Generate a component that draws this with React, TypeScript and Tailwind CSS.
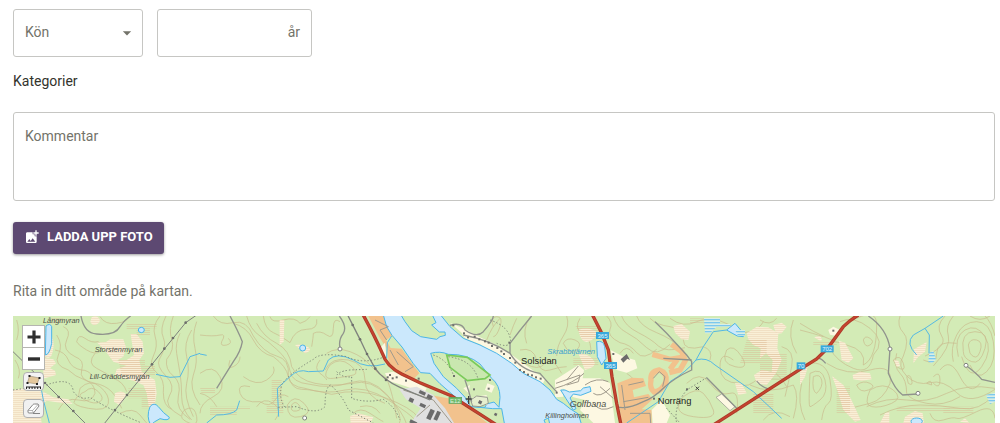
import type { ReactNode } from 'react';
import { MdAddPhotoAlternate, MdArrowDropDown } from 'react-icons/md';

interface MapButtonProps {
  label: string;
  className: string;
  children: ReactNode;
}

const contours = [
  // west
  'M190,50 q25,10 10,40 t25,50 q30,10 20,40 t40,40 q30,5 50,25 t30,50',
  'M170,75 q20,30 5,60 t30,45 q20,20 50,30 t30,40 q-10,30 -50,20 t-60,30',
  'M230,95 q5,-25 25,-10 t40,10 q20,20 5,30 t-40,-5 t-30,-25',
  'M255,245 q20,-20 40,0 t5,30 t-45,-5 t0,-25',
  'M240,235 q30,-30 60,-5 t25,50 t-60,15 t-40,-25 t15,-35',
  'M165,120 q30,5 40,30 t40,30 q20,0 35,20',
  'M480,18 q-25,30 -15,60 t-5,60 q-15,30 10,50 t20,60 q0,40 25,50',
  'M498,18 q-20,40 -8,65 t-12,65 q-10,20 20,50 t10,60 t35,60',
  'M520,18 q-15,40 -5,70 t-15,60 q-5,30 20,50 t15,60 t35,70',
  'M540,70 q-15,30 -10,60 t10,60 t5,70 t30,70',
  'M575,60 q-25,40 -15,80 t0,80 t20,100',
  'M590,35 q-15,40 -5,80 t-5,80 t20,90',
  'M285,130 q-25,30 5,45 t50,30 q30,10 40,40',
  'M300,20 q15,25 50,20 t35,-20',
  'M45,150 q20,30 10,55 M50,30 q10,30 0,60',
  'M545,320 q0,-20 20,-25 t25,25 t-20,20 t-25,-20',
  'M360,310 q40,-20 60,5 t20,24',
  // between the western power line and the railway
  'M600,75 q40,5 60,0 t5,20 q-5,15 15,10 t5,-20',
  'M640,18 q20,30 60,20 t60,40 q30,50 70,60 t35,60 q10,40 40,40 t90,15 q80,-20 160,10 t100,60',
  'M700,40 q40,10 60,50 t60,50 q40,30 45,60 t50,35 q60,20 120,5 t130,30 t80,60',
  'M740,18 q10,40 40,60 t50,40 q35,30 40,65 t60,40 q60,15 120,-5 t110,35 t60,90',
  'M770,40 q20,40 60,60 t45,70 q20,40 70,50 t110,0 q60,-15 110,40 t30,90',
  'M790,18 q5,40 30,50 t50,30 q15,-40 50,-40 t30,-30',
  'M810,20 q5,20 40,10 t50,10 q20,-5 30,-20',
  'M980,130 q30,-20 70,-5 t60,40 t50,40 q20,50 30,120',
  'M990,165 q30,-25 60,0 t10,30 t-60,10 t-10,-40',
  'M975,180 q20,-40 70,-30 t50,60 t60,70',
  'M600,190 q40,-30 60,10 t-20,60 t-40,50',
  'M750,230 q-40,-10 -30,20 t60,25 q30,20 45,-5 t40,-10 M730,200 q40,30 70,10 t20,-40',
  'M600,250 q30,5 50,40 M770,290 q20,-30 50,-10 t5,50',
  'M875,285 q10,-15 22,0 t-8,18 t-14,-18',
  'M862,285 q20,-35 50,-5 t-10,40 t-40,-35',
  'M960,150 q-20,25 0,40 t20,20 M935,110 q5,-30 5,-40 q20,-10 40,5 t20,-20 t20,-20',
  'M1060,310 q20,-20 50,0 t40,25 M1080,290 q40,-10 60,20',
  'M690,150 q-10,30 10,20 t20,-30',
  // north shore
  'M1480,50 q-10,-30 10,-30 t10,30 t-20,30',
  'M1530,75 q10,-30 20,-50 M1580,100 q-15,-40 10,-80 M1560,120 q40,-10 50,30 t40,30 t50,-10',
  'M1460,90 q15,-40 40,-65 M1690,100 q10,-20 35,-10 t5,30 t-40,-20',
  'M1740,25 q-20,30 10,50 t20,60 M1700,18 q10,30 -10,60 t-20,60',
  'M1575,160 q40,25 60,0 t50,30',
  // north-east of the main road
  'M1820,18 q20,20 10,40 t30,40 q30,5 50,30 t60,-10',
  'M1840,18 q10,35 40,50 t60,45 t70,-10',
  'M1865,18 q10,30 50,50 t60,40 t80,5',
  'M1910,18 q10,30 60,50 t60,40',
  'M1950,25 q20,20 60,25 t40,40 t60,20 q30,10 20,40',
  'M2010,25 q40,30 80,10 t100,10 q30,30 60,20 t40,-30',
  'M2180,120 q20,-20 45,20 t-20,30 t-25,-50',
  'M2200,150 q-40,-30 -40,20 t60,50 q20,20 60,-20 t80,30',
  'M2060,220 q40,-40 70,0 t60,30 t20,60',
  'M2050,260 q40,-30 60,-10 t30,50 t-60,20 t-30,-60',
  'M2280,30 q30,20 50,-5 M2345,110 q40,10 30,60 t-20,90',
  'M2280,200 q60,20 110,-10 M2250,225 q60,30 130,0 q20,30 0,100',
  'M2380,30 q-20,50 10,100 M2290,330 q30,-40 80,-10',
  'M1880,190 q30,20 20,30 M1860,130 q20,-30 40,0',
  // east
  'M2400,40 q80,50 140,65 t50,60 q20,-10 30,-40 t10,-80 t-60,-20',
  'M2400,60 q40,10 70,20 M2520,35 q40,-20 90,20 t10,80 q-10,60 -60,40 t-70,-60',
  'M2590,90 q5,-15 20,-5 t0,20 t-20,-15',
  'M2440,200 q20,-10 25,10 t-15,40 q-15,-5 -10,-50',
  'M2430,190 q35,-20 45,20 t-15,60 t-30,20 t0,-100',
  'M2420,160 q60,-10 70,50 t-5,70 t-20,50 M2405,220 q-15,60 10,110',
  'M2480,160 q60,40 130,20 t60,40 q-20,50 -60,60 t-80,20',
  'M2570,225 q20,-15 40,-5 t-5,20 t-35,-15 M2610,240 q40,-25 70,0 t-5,40 t-60,10 t-5,-50',
  'M2690,130 q-10,40 10,60 t20,60 q10,20 60,30 t100,-20',
  'M2700,18 q-10,30 10,50 t0,70 q-20,30 10,60 t70,20 t80,30 t115,-10',
  'M2680,150 q20,-20 30,10 t-20,10 z M2720,200 q10,-10 15,10 t-10,10 z',
  'M2600,290 q60,-30 120,-20 t120,-20 t145,-15',
  'M2640,315 q60,-30 120,-30 t120,10 t100,-40',
  'M2790,310 q10,30 40,20 t40,-5 t60,-20 t55,20 M2770,150 q40,20 40,-20 t60,-30',
  'M2835,18 q-30,30 -10,60 t-50,60 M2860,18 q-25,30 -15,60 t-45,90',
  'M2860,155 q-10,-40 10,-80 t60,-40 t50,60 t-20,90 t-50,-20',
  'M2875,140 q-15,-60 20,-80 t60,20 t-10,90 t-60,-30',
  'M2890,125 q-10,-60 35,-60 t30,50 t-40,40 t-25,-30',
  'M2905,105 q5,-20 25,-15 t10,35 t-30,5 z',
  'M2820,180 q30,-40 60,20 t60,20 M2780,220 q15,-15 15,5 z M2800,200 q20,-20 20,10 t-20,10',
  'M2955,18 q20,20 30,60 M2910,18 q30,20 60,0',
];

const bogs = [
  'M135,65 q30,10 25,50 t-25,25 z',
  'M130,143 L160,148 L168,160 L150,175 L165,182 L168,195 L135,205 L130,205 Z',
  'M275,22 q15,-8 22,3 t-6,18 t-20,-8 z',
  'M292,98 L318,96 L330,88 L370,88 L378,112 L370,140 L350,152 L380,150 L402,135 L396,100 L392,72 L410,72 L428,95 L432,130 L418,150 L425,185 L465,210 L470,250 L460,310 L448,300 L440,250 L430,225 L400,212 L370,205 L345,195 L350,178 L380,168 L340,155 L318,125 Z',
  'M345,250 Q365,238 378,252 Q372,275 358,285 L342,275 Z',
  'M39,240 L75,235 L130,245 L160,262 L205,268 L218,282 L190,280 L140,272 L118,290 L125,339 L39,339 Z',
  'M839,30 H853 L851,95 L839,105 Z',
  'M885,105 q20,-5 38,5 t-8,20 z',
  'M1050,318 L1075,310 L1120,322 L1112,339 H1052 Z',
  'M1735,60 q20,-10 45,0 t-5,30 t-40,-30 z',
  'M1735,130 q30,0 45,20 t-25,30 z',
  'M2020,48 L2045,42 L2070,65 L2065,90 L2045,88 L2025,68 Z',
  'M2240,70 L2270,50 L2305,52 L2335,70 L2332,115 L2345,150 L2328,190 L2300,225 L2270,220 L2262,195 L2285,180 L2315,185 L2318,150 L2298,130 L2280,145 L2282,115 L2260,105 L2245,88 Z',
  'M2320,45 L2345,38 L2360,50 L2345,70 L2328,72 Z',
  'M2205,220 L2225,220 L2240,250 L2215,255 Z',
  'M2400,180 L2425,165 L2415,200 L2400,225 Z',
  'M2443,82 q20,-8 22,5 t-22,-5 z',
  'M2517,92 L2535,98 L2560,145 L2545,158 L2525,150 Z',
  'M2558,195 L2580,185 L2610,190 L2615,208 L2585,212 L2560,208 Z',
  'M2496,198 L2530,225 L2552,265 L2582,330 L2565,335 L2530,300 L2512,240 Z',
  'M2640,339 L2655,310 L2668,305 V339 Z',
  'M2740,160 L2742,118 L2780,96 L2775,125 L2755,140 Z',
  'M2682,150 L2695,152 L2700,168 L2690,170 Z',
  'M2710,339 L2715,320 L2745,303 L2768,310 L2772,339 Z',
  'M2880,335 L2895,325 L2908,339 Z',
];

const marshes = [
  'M380,40 h90 v15 h-20 v20 h-40 v-15 h-30 z',
  'M355,150 h80 v15 h30 v30 h-100 z',
  'M385,235 h80 v60 h-40 v-30 h-40 z',
  'M150,25 h40 v15 h-40 z',
  'M630,290 h120 v10 h-40 v15 h-80 z',
  'M815,210 h30 v60 h5 v40 h-50 v-25 h15 z',
  'M600,232 h45 v20 h-40 z',
  'M1725,45 h70 v40 h-50 z',
  'M1720,145 h75 v20 h-75 z',
  'M2070,25 h60 v15 h-60 z',
  'M2240,90 h60 v40 h60 v70 h-80 v-40 h-60 z',
  'M2260,250 h60 v60 h-60 z',
  'M2440,95 h70 v12 h-70 z',
  'M2510,230 h40 v80 h-40 z',
  'M2690,290 h160 v15 h-160 z',
  'M2830,290 h90 v20 h-90 z',
];

const trails = [
  'M39,240 L131,228 Q215,195 220,245 Q240,272 270,262 Q330,300 425,339',
  'M1155,140 Q1090,165 1040,140 Q960,125 940,148 Q860,195 845,225 Q835,265 855,292',
  'M835,292 L890,290 Q950,315 975,290 Q975,230 992,225 Q1030,260 1045,300 L1120,339',
  'M1010,185 Q1030,205 1055,200 L1055,265 Q1100,280 1150,268 Q1185,290 1200,330',
  'M1010,205 Q1005,185 1050,180 L1100,178',
  'M1470,30 Q1530,50 1532,95 Q1525,115 1490,100',
  'M1300,135 Q1345,150 1362,200',
  'M1345,140 Q1420,150 1435,210',
  'M2120,203 L2060,240 Q2020,290 2030,339',
  'M2000,295 L2040,339',
];

const minorRoads = [
  'M243,18 Q252,70 290,72 Q345,78 360,50 Q375,28 392,18',
  'M690,18 Q715,65 727,95 Q722,125 700,155 L650,235',
  'M1018,18 Q1042,50 1030,70 Q1015,90 1020,112',
  'M1350,46 Q1385,35 1395,60 Q1430,85 1450,65 Q1480,30 1480,18',
  'M1390,75 Q1470,90 1530,130 L1530,100 Q1560,60 1595,18',
  'M1530,130 Q1560,180 1620,190 Q1650,225 1670,245',
  'M1395,210 L1405,240 L1415,275',
  'M1965,35 L2000,70 L2060,135 L2075,155 L2075,180 Q2020,205 1990,235 Q1960,265 1930,275 Q1880,300 1850,290',
  'M2075,150 L1990,145 M2120,203 L2210,295',
  'M2270,213 Q2280,228 2305,237',
  'M2455,145 Q2465,145 2477,160',
  'M2605,18 Q2660,55 2670,115 L2665,190 Q2685,240 2708,255 L2752,252',
  'M2900,168 Q2930,190 2945,208 L2985,217',
];

const streams = [
  'M600,130 L570,140 L540,200 L510,202 L468,193',
  'M120,215 L130,270 L148,339',
  'M600,132 L620,136',
  'M1155,162 Q1100,178 1060,150 Q1010,125 985,150 L970,183 L925,185 Q895,175 870,200 L832,235 L836,320',
  'M620,339 L650,315 Q695,315 710,300 L719,272',
  'M1175,78 L1162,98 L1160,145',
  'M2180,60 L2140,65 L2110,110 L2088,150 Q2060,185 2010,215 Q1995,240 1975,275 L1880,339',
  'M2088,150 Q2120,140 2145,165 L2260,245 L2345,325',
  'M2750,135 Q2715,100 2740,75 L2775,55 L2830,18',
  'M2775,55 L2788,75 L2787,130',
];

const mainRoads = [
  'M1088,12 Q1125,80 1147,130 Q1160,170 1205,192 L1260,218 L1355,258 L1490,345',
  'M1776,12 L1803,65 L1825,120 L1836,200 L1850,280 L1863,345',
  'M2140,345 L2400,178 L2450,147 L2485,112 L2530,50 Q2550,30 2575,15',
];

const blocks: [number, number, number, number][] = [
  [1260, 240, 20, 10],
  [1284, 252, 16, 12],
  [1230, 262, 14, 12],
  [1262, 278, 18, 10],
  [1292, 296, 14, 32],
  [1312, 302, 12, 28],
  [1232, 328, 22, 10],
  [1438, 270, 10, 10],
  [1485, 308, 8, 8],
];

const powerPoles = [
  [557, 38], [519, 84], [493, 116], [456, 163], [417, 210], [381, 255], [345, 300],
  [135, 219], [176, 261], [220, 303],
  [1058, 45], [1080, 88], [1101, 132], [1126, 176], [1158, 210],
];

const houses = [
  [1360, 46], [1392, 70], [1404, 82], [1424, 80], [1438, 88], [1455, 94], [1466, 98], [1476, 108],
  [1492, 114], [1504, 124], [1512, 132], [1530, 144], [1546, 158], [1560, 180], [1572, 186],
  [1584, 194], [1596, 196], [1608, 202], [1622, 206], [1670, 248], [1528, 98], [1362, 198],
  [1422, 238], [1470, 210], [1466, 236], [1256, 206], [2061, 238], [1840, 132], [2500, 62],
  [1170, 195], [1178, 205], [1163, 202], [1190, 202], [1218, 212], [1962, 266],
];

const junctions = [
  [1020, 117], [914, 324], [2670, 117], [2754, 250], [2898, 166],
];

const shields: [number, number, string][] = [
  [1788, 66, '365'],
  [1812, 156, '365'],
  [2462, 106, '702'],
  [2390, 157, '70'],
];

function AreaMap() {
  return (
    <svg
      className="block h-full w-full font-['Liberation_Sans',Arial,sans-serif]"
      viewBox="39 18 2946 321"
      preserveAspectRatio="xMinYMin slice"
      role="img"
      aria-label="Karta"
    >
      <defs>
        <pattern id="marsh" width="12" height="6" patternUnits="userSpaceOnUse">
          <rect width="12" height="2" fill="#d9b38c" />
        </pattern>
        <pattern id="wetland" width="12" height="9" patternUnits="userSpaceOnUse">
          <rect width="12" height="9" fill="#d9efe6" />
          <rect width="12" height="4" fill="#7cc8ee" />
        </pattern>
      </defs>

      <rect x="39" y="18" width="2946" height="1200" fill="#d3ebb6" />

      <g fill="none" stroke="#c5a47c" strokeWidth="2" opacity="0.7">
        {contours.map((d) => <path key={d} d={d} />)}
      </g>
      <g fill="#f9efd6">
        {bogs.map((d) => <path key={d} d={d} />)}
      </g>
      <g fill="url(#marsh)" opacity="0.6">
        {marshes.map((d) => <path key={d} d={d} />)}
      </g>
      <g fill="url(#marsh)" opacity="0.35">
        {bogs.map((d) => <path key={d} d={d} />)}
      </g>

      {/* built-up areas */}
      <g fill="#f2c28d">
        <path d="M1105,18 H1150 L1176,78 L1158,90 L1172,114 L1205,116 L1240,166 L1258,190 L1240,208 L1200,188 L1168,165 L1160,115 L1140,85 Z" />
        <path d="M1290,255 L1360,268 L1420,305 L1462,339 H1345 L1335,295 Z" />
        <path d="M1852,220 L1895,203 L1930,205 L1938,228 L1898,240 L1902,262 L1945,252 L1958,268 L1925,298 L1955,300 V339 H1864 Z" />
      </g>
      <g fill="none" stroke="#f2c28d" strokeWidth="16">
        <path d="M1957,133 L2010,148 L2045,142 M2010,178 L2032,148 M2014,103 L2045,125 L2056,152 L2040,180 L2008,188" />
        <path d="M1953,210 Q1950,185 1978,180 Q2002,188 1998,215 Q1985,245 1962,246 Q1948,235 1953,210 Z" />
      </g>
      <g fill="#fdf8e2">
        <path d="M1135,120 L1155,98 L1160,150 L1152,140 Z M1155,190 L1180,185 L1235,210 L1280,235 L1272,250 L1215,228 L1165,212 Z" />
        <path d="M1350,38 L1395,58 L1440,82 L1490,105 L1540,138 L1635,208 L1628,222 L1560,190 L1500,140 L1440,103 L1395,85 L1385,68 Z" />
        <path d="M1665,210 L1735,165 L1752,180 L1748,205 L1800,205 L1830,220 L1845,339 H1780 L1740,300 L1755,270 L1720,262 L1688,235 L1690,260 L1665,262 Z" />
        <path d="M1832,120 L1870,140 L1905,150 L1912,175 L1880,188 L1850,180 L1838,150 Z" />
        <path d="M1955,300 L1985,270 L2010,315 L2000,339 H1958 Z" />
        <path d="M2485,60 L2500,50 L2520,60 L2510,78 L2490,74 Z" />
      </g>
      <path d="M1198,238 L1250,230 L1300,255 L1335,295 L1362,339 H1232 L1262,295 L1218,268 Z" fill="#e0e0e0" />
      <path d="M2148,262 L2165,252 L2205,290 L2190,302 Z" fill="#fdf8e2" stroke="#8f8f8a" strokeWidth="2" />

      {/* river, lakes and islands */}
      <g fill="#cbe8fc" stroke="#4bb5e8" strokeWidth="3">
        <path d="M1150,15 L1160,50 L1176,76 L1206,111 L1240,161 L1262,188 L1290,190 L1320,221 L1360,256 L1388,281 L1400,288 L1478,296 L1505,296 L1514,345 H1745 L1735,312 L1710,296 L1690,280 L1670,268 L1650,240 L1620,215 L1570,190 L1535,160 L1490,130 L1440,105 L1390,85 L1350,50 L1322,15 Z" />
        <path d="M1682,240 L1695,240 L1708,246 L1742,242 L1750,234 L1770,230 L1773,244 L1742,256 L1720,252 L1710,264 L1728,296 L1720,300 L1698,266 Z" />
        <path d="M1790,95 Q1810,90 1814,110 L1818,145 L1805,165 L1792,140 Z" />
        <path d="M138,48 Q150,38 155,50 L155,100 Q148,135 136,135 Z" />
        <path d="M450,290 Q462,275 475,290 Q490,310 508,322 Q508,334 480,326 Q462,335 452,345 Q438,320 450,290 Z" />
        <ellipse cx="424" cy="60" rx="9" ry="8" />
        <ellipse cx="908" cy="114" rx="9" ry="9" />
        <path d="M2180,60 L2205,40 L2222,60 L2230,80 L2212,78 L2190,66 Z" />
        <ellipse cx="2750" cy="334" rx="17" ry="10" />
      </g>
      <g fill="#d3ebb6" stroke="#4bb5e8" strokeWidth="3">
        <path d="M1203,15 L1215,35 L1235,62 L1262,80 L1310,88 L1320,80 L1336,76 L1335,66 L1318,66 L1295,45 L1308,38 L1297,15 Z" />
        <path d="M1292,130 Q1320,122 1345,133 Q1405,132 1440,162 L1475,205 Q1500,225 1500,262 L1497,292 L1482,276 L1460,282 L1455,292 L1412,290 L1395,262 L1370,235 L1330,200 L1302,160 Z" />
        <path d="M1632,330 L1645,324 L1650,345 H1638 Z" />
      </g>
      <path d="M1390,235 L1410,225 L1406,250 Z M1462,220 L1484,228 L1475,248 L1455,240 Z M1418,262 L1460,255 L1462,285 L1425,285 Z" fill="#fdf8e2" />
      <path d="M1340,135 L1402,142 L1470,195 L1455,206 L1402,212 L1350,172 Z" fill="#c9e7af" stroke="#7acb5a" strokeWidth="5" />
      <path d="M1412,270 L1430,258 L1462,262 L1465,280 L1440,290 L1418,288 Z" fill="#e6efcf" stroke="#96998f" strokeWidth="3" />
      <g fill="url(#wetland)">
        <path d="M2112,24 H2160 V42 H2190 V50 H2150 L2130,70 H2115 Z" />
        <path d="M2788,128 L2800,122 L2808,150 L2795,160 L2785,155 Z" />
        <path d="M2958,255 L2985,248 V275 L2970,282 Z" />
        <path d="M2205,60 H2235 V78 H2215 Z" />
      </g>
      <g fill="none" stroke="#55b9e3" strokeWidth="3">
        {streams.map((d) => <path key={d} d={d} />)}
      </g>

      {/* roads, trails and power lines */}
      <g fill="none" stroke="#7d8577" strokeWidth="3" strokeDasharray="4 6">
        {trails.map((d) => <path key={d} d={d} />)}
      </g>
      <g fill="none" stroke="#90938d" strokeWidth="4">
        {minorRoads.map((d) => <path key={d} d={d} />)}
      </g>
      <g fill="none" stroke="#a09a8c" strokeWidth="3">
        <path d="M1125,30 L1165,50 L1140,60 L1160,90 M1190,125 L1240,170 L1215,185 M1170,120 L1195,165" />
        <path d="M1865,225 L1875,300 M1885,225 L1930,215 M1870,275 L1945,262 M1890,310 L1950,310 L1952,339 M1960,205 L1978,185 L1995,200 L1988,230" />
        <path d="M1668,220 L1740,195 L1735,215 L1700,225 M1700,210 L1735,168 M1752,190 Q1720,220 1665,235 M1755,225 Q1790,200 1825,215 M1780,250 Q1800,265 1830,235 M1800,230 L1840,265 M1780,280 Q1800,310 1840,290" />
        <path d="M1210,240 L1300,270 L1355,339 M1250,320 L1290,285" />
      </g>
      <g fill="none" stroke="#7f827d" strokeWidth="3">
        <path d="M590,15 L557,38 L456,163 L381,255 L312,342" />
        <path d="M39,125 L131,215 L258,342" />
        <path d="M1043,15 L1080,88 L1101,132 L1126,176 Q1150,210 1200,232 L1290,270" strokeWidth="4" />
      </g>
      <g fill="none" stroke="#ab3a2a" strokeWidth="10">
        {mainRoads.map((d) => <path key={d} d={d} />)}
      </g>
      <g fill="none" stroke="#c5432f" strokeWidth="5">
        {mainRoads.map((d) => <path key={d} d={d} />)}
      </g>

      <g fill="#6d6f6b">
        {powerPoles.map(([x, y]) => <circle key={`${x}-${y}`} cx={x} cy={y} r="4" />)}
        {houses.map(([x, y]) => <rect key={`${x}-${y}`} x={x - 3} y={y - 3} width="6" height="6" />)}
      </g>
      <g fill="#6b6b6b">
        {blocks.map(([x, y, width, height]) => (
          <rect key={`${x}-${y}`} x={x} y={y} width={width} height={height} transform={`rotate(25 ${x} ${y})`} />
        ))}
        <path d="M1862,148 L1880,132 L1890,150 L1882,146 L1870,158 Z" />
      </g>
      <g fill="#ffffff" stroke="#80837e" strokeWidth="3">
        {junctions.map(([x, y]) => <circle key={x} cx={x} cy={y} r="6" />)}
      </g>
      <path d="M1406,258 V282 M1397,267 H1415" stroke="#3f3f3f" strokeWidth="4" />
      <path d="M2087,230 L2097,240 M2097,230 L2087,240" stroke="#3f3f3f" strokeWidth="3" />

      {shields.map(([x, y, text]) => (
        <g key={`${x}-${y}`}>
          <rect x={x} y={y} width={text.length * 13} height="21" fill="#3aa9dc" />
          <text x={x + text.length * 6.5} y={y + 17} fontSize="18" textAnchor="middle" fill="#e6f6fd">{text}</text>
        </g>
      ))}
      <rect x="1347" y="262" width="38" height="18" fill="#6fb96c" stroke="#5aa35b" strokeWidth="2" />
      <text x="1366" y="278" fontSize="18" textAnchor="middle" fill="#dff2dc">E12</text>

      <g fontStyle="italic" fontSize="22" fill="#4a4e46">
        <text x="129" y="38">Långmyran</text>
        <text x="284" y="125">Storstenmyran</text>
        <text x="269" y="208">Lill-Oräddesmyran</text>
        <text x="1636" y="325">Killingholmen</text>
        <text x="1709" y="292" fontSize="27">Golfbana</text>
        <text x="1642" y="132" fontSize="23" fill="#3a9fd0">Skrabbtjärnen</text>
      </g>
      <g fontSize="28" fill="#1d1d1b">
        <text x="1563" y="163">Solsidan</text>
        <text x="1973" y="283">Norräng</text>
      </g>
    </svg>
  );
}

function MapButton({ label, className, children }: MapButtonProps) {
  return (
    <button type="button" aria-label={label} className={`flex items-center justify-center ${className}`}>
      {children}
    </button>
  );
}

function MapControls() {
  return (
    <div className="absolute top-[9px] left-[9px] flex flex-col items-center">
      <div className="flex flex-col border border-[#b5b5b0]">
        <MapButton label="Zooma in" className="h-[22px] w-[21px] border-b border-[#b5b5b0] bg-white">
          <svg className="h-[14px] w-[14px]" viewBox="0 0 14 14" fill="#2e2e2e">
            <path d="M5.4 0.5h3.2v4.9h4.9v3.2h-4.9v4.9h-3.2v-4.9h-4.9v-3.2h4.9z" />
          </svg>
        </MapButton>
        <MapButton label="Zooma ut" className="h-[21px] w-[21px] bg-white">
          <svg className="h-[14px] w-[14px]" viewBox="0 0 14 14" fill="#2e2e2e">
            <path d="M1 5.3h12v3.4h-12z" />
          </svg>
        </MapButton>
      </div>
      <MapButton label="Rita område" className="mt-[2px] h-[19px] w-[21px] rounded-sm border border-[#b0b0b0] bg-[#f3f3f3]">
        <svg className="h-[17px] w-[17px]" viewBox="0 0 17 17" fill="none">
          <path d="M4.500 3L14.500 5L12 11L2.500 9.500Z" fill="#e3c79b" stroke="#998b70" strokeWidth="0.6" />
          <path d="M3.500 2h2v2h-2zM13.500 4h2v2h-2zM11 10h2v2h-2zM1.500 9h2v2h-2z" fill="#222222" />
          <path d="M1 14h15M1.500 14v2M4.300 14v2M7.100 14v2M9.900 14v2M12.700 14v2M15.500 14v2" stroke="#222222" />
        </svg>
      </MapButton>
      <MapButton label="Radera" className="mt-2 h-[19px] w-[21px] rounded-sm border border-[#b0b0b0] bg-[#f1f1f1]">
        <svg className="h-[15px] w-[15px]" viewBox="0 0 15 15" fill="#ffffff" stroke="#858585" strokeLinejoin="round">
          <path d="M2 9.500L7 3.500Q7.500 3 8.500 3H12L13 5L7.500 12H3Q2 12 2 11Z" />
          <path d="M2 9.500H6.500L12 3.500M6.500 9.500L7.500 12" strokeWidth="0.6" />
          <path d="M7 12.500H14" />
        </svg>
      </MapButton>
    </div>
  );
}

export default function App() {
  return (
    <main className="bg-white pt-[9px] pr-[5px] pl-[13px] font-[Roboto,sans-serif] text-sm text-[#73736a]">
      <form>
        <div className="flex gap-[14px]">
          <div className="grid w-[130px] items-center">
            <select
              aria-label="Kön"
              defaultValue=""
              className="col-start-1 row-start-1 h-12 w-full appearance-none rounded-[3px] border border-[#c6c6c3] bg-transparent px-[11px] pb-[2px]"
            >
              <option value="">Kön</option>
              <option value="kvinna">Kvinna</option>
              <option value="man">Man</option>
            </select>
            <MdArrowDropDown className="pointer-events-none col-start-1 row-start-1 mr-[6px] size-5 justify-self-end" />
          </div>
          <label className="flex h-12 w-[155px] items-center rounded-[3px] border border-[#c6c6c3] px-[11px] pb-[2px]">
            <input type="text" inputMode="numeric" className="min-w-0 flex-1 outline-none" />
            <span>år</span>
          </label>
        </div>

        <h2 className="mt-[14px] leading-5 text-[#33332c]">Kategorier</h2>

        <textarea
          aria-label="Kommentar"
          placeholder="Kommentar"
          className="mt-[21px] block h-[89px] w-full resize-none rounded-[3px] border border-[#c6c6c3] px-[11px] py-[13px] placeholder:text-[#73736a]"
        />

        <button
          type="button"
          className="mt-[21px] flex h-8 items-center gap-[7px] rounded-[3px] bg-[#5d4972] pr-[11px] pb-[2px] pl-[11px] text-[13px] font-bold text-white uppercase shadow-[0_1px_3px_rgba(0,0,0,0.4)]"
        >
          <MdAddPhotoAlternate className="size-4" />
          Ladda upp foto
        </button>

        <p className="mt-[27px] leading-5">Rita in ditt område på kartan.</p>
      </form>

      <section aria-label="Karta" className="relative mt-[15px] h-[107px] overflow-hidden">
        <AreaMap />
        <MapControls />
      </section>
    </main>
  );
}
